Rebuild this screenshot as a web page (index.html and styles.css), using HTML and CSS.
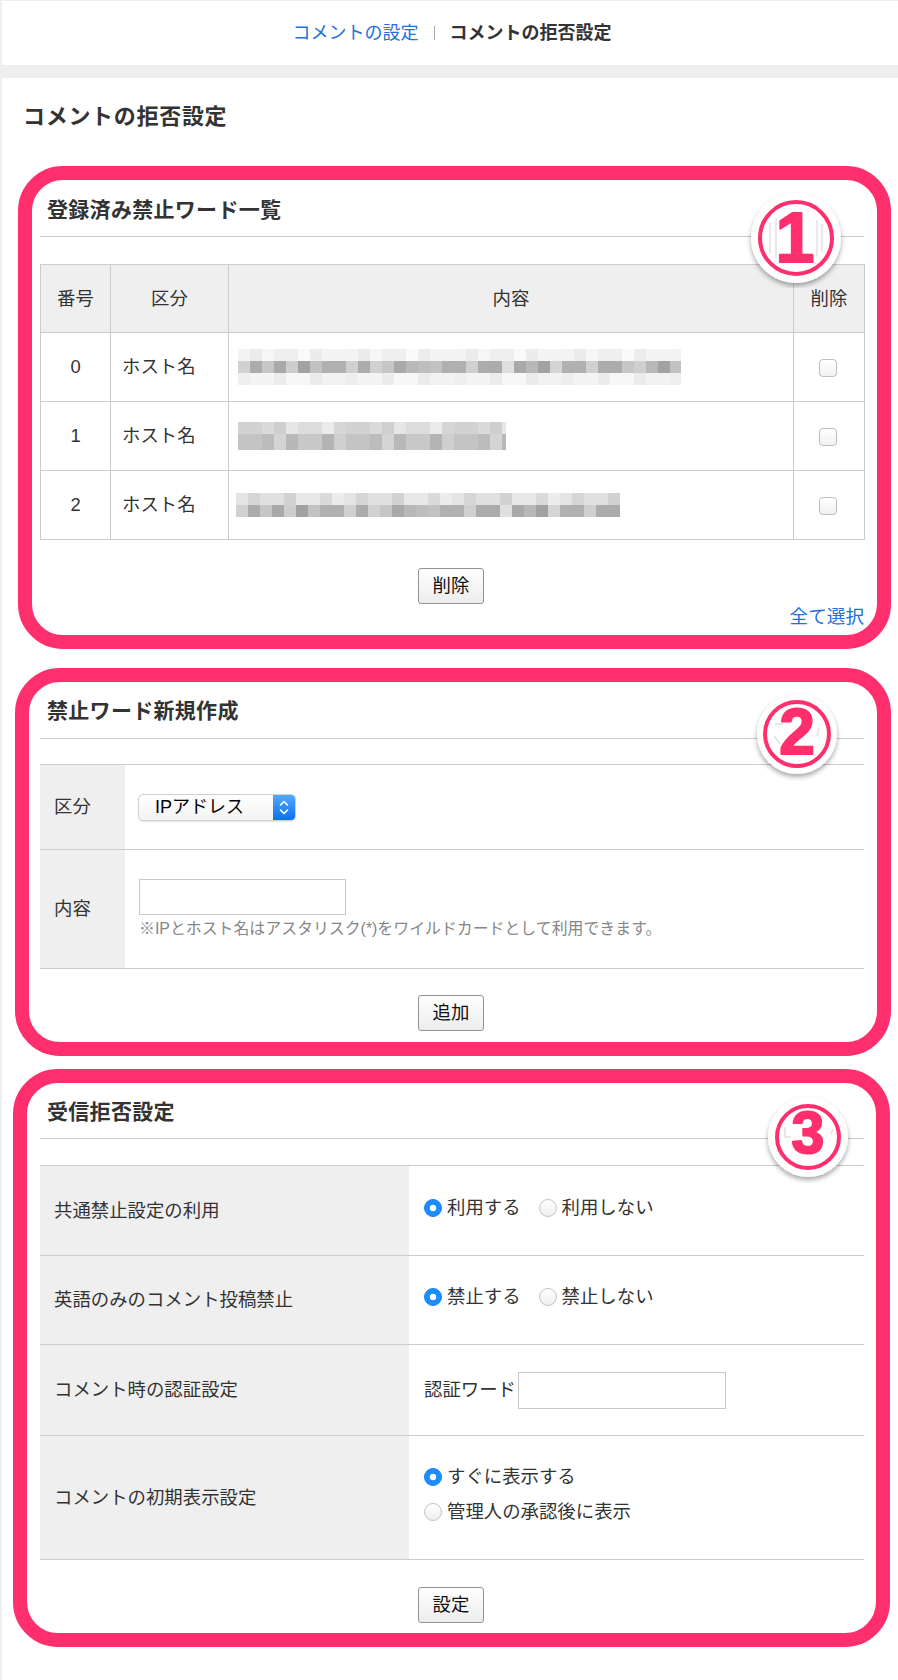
FILE: index.html
```html
<!DOCTYPE html>
<html lang="ja">
<head>
<meta charset="utf-8">
<title>コメントの拒否設定</title>
<link rel="stylesheet" href="styles.css">
</head>
<body>
<header class="topbar">
  <nav class="crumbs">
    <a class="crumb-link" href="#">コメントの設定</a>
    <span class="crumb-sep"></span>
    <strong class="crumb-current">コメントの拒否設定</strong>
  </nav>
</header>

<main class="content">
  <h1 class="page-title">コメントの拒否設定</h1>

  <div class="anno anno-1">
    <section class="panel">
      <h2 class="panel-title">登録済み禁止ワード一覧</h2>
      <table class="list-table">
        <colgroup>
          <col class="c-num"><col class="c-kind"><col class="c-body"><col class="c-del">
        </colgroup>
        <thead>
          <tr class="head-row"><th>番号</th><th>区分</th><th>内容</th><th>削除</th></tr>
        </thead>
        <tbody>
          <tr class="body-row">
            <td class="num">0</td>
            <td class="kind">ホスト名</td>
            <td class="body">
              <div class="blur blur-a">
                <span class="band band-light"></span>
                <span class="band band-dark"></span>
                <span class="band band-faint"></span>
              </div>
            </td>
            <td class="del"><input type="checkbox" class="check"></td>
          </tr>
          <tr class="body-row">
            <td class="num">1</td>
            <td class="kind">ホスト名</td>
            <td class="body">
              <div class="blur blur-b">
                <span class="band band-mid"></span>
                <span class="band band-tall band-middark"></span>
              </div>
            </td>
            <td class="del"><input type="checkbox" class="check"></td>
          </tr>
          <tr class="body-row">
            <td class="num">2</td>
            <td class="kind">ホスト名</td>
            <td class="body">
              <div class="blur blur-c">
                <span class="band band-mid2"></span>
                <span class="band band-dark"></span>
              </div>
            </td>
            <td class="del"><input type="checkbox" class="check"></td>
          </tr>
        </tbody>
      </table>
      <div class="actions actions-1"><button class="btn" type="button">削除</button></div>
      <div class="select-all"><a href="#">全て選択</a></div>
    </section>
    <svg class="badge badge-1" width="100" height="100" viewBox="0 0 100 100">
      <defs>
        <filter id="sh1" x="-30%" y="-30%" width="160%" height="170%">
          <feDropShadow dx="0" dy="3" stdDeviation="2.5" flood-color="#000" flood-opacity="0.35"/>
        </filter>
      </defs>
      <circle cx="50" cy="50" r="45" fill="#fff" filter="url(#sh1)"/>
      <path d="M24 34 L24 66 M30 30 L30 70 M71 32 L71 68 M76 36 L76 64" stroke="#e2e2e2" stroke-width="1.5" fill="none"/>
      <circle cx="50" cy="50" r="36" fill="none" stroke="#ff2f6d" stroke-width="4"/>
      <text x="49" y="74" text-anchor="middle" class="badge-num badge-num-1">1</text>
    </svg>
  </div>

  <div class="anno anno-2">
    <section class="panel">
      <h2 class="panel-title">禁止ワード新規作成</h2>
      <table class="form-table form-table-2">
        <tr class="row-85">
          <th>区分</th>
          <td>
            <div class="select">
              <span class="select-value">IPアドレス</span>
              <span class="select-arrows">
                <svg width="22" height="25" viewBox="0 0 22 25"><path d="M7.5 10 L11 6.5 L14.5 10 M7.5 15 L11 18.5 L14.5 15" stroke="#fff" stroke-width="1.6" fill="none" stroke-linecap="round" stroke-linejoin="round"/></svg>
              </span>
            </div>
          </td>
        </tr>
        <tr class="row-119">
          <th>内容</th>
          <td>
            <input type="text" class="text-input">
            <p class="note">※IPとホスト名はアスタリスク(*)をワイルドカードとして利用できます。</p>
          </td>
        </tr>
      </table>
      <div class="actions actions-2"><button class="btn" type="button">追加</button></div>
    </section>
    <svg class="badge badge-2" width="100" height="100" viewBox="0 0 100 100">
      <defs>
        <filter id="sh2" x="-30%" y="-30%" width="160%" height="170%">
          <feDropShadow dx="0" dy="3" stdDeviation="2.5" flood-color="#000" flood-opacity="0.35"/>
        </filter>
      </defs>
      <circle cx="50" cy="50" r="40" fill="#fff" filter="url(#sh2)"/>
      <path d="M28 40 L36 40 M27 52 L33 60 M72 44 L70 52" stroke="#e0e0e0" stroke-width="1.5" fill="none"/>
      <circle cx="50" cy="50" r="32" fill="none" stroke="#ff2f6d" stroke-width="4"/>
      <text x="50" y="70" text-anchor="middle" class="badge-num badge-num-2">2</text>
    </svg>
  </div>

  <div class="anno anno-3">
    <section class="panel">
      <h2 class="panel-title">受信拒否設定</h2>
      <table class="form-table form-table-3">
        <tr class="row-90">
          <th>共通禁止設定の利用</th>
          <td class="td-radio">
            <div class="opts">
              <label class="opt"><input type="radio" name="common" class="radio" checked>利用する</label>
              <label class="opt"><input type="radio" name="common" class="radio">利用しない</label>
            </div>
          </td>
        </tr>
        <tr class="row-89">
          <th>英語のみのコメント投稿禁止</th>
          <td class="td-radio">
            <div class="opts">
              <label class="opt"><input type="radio" name="eng" class="radio" checked>禁止する</label>
              <label class="opt"><input type="radio" name="eng" class="radio">禁止しない</label>
            </div>
          </td>
        </tr>
        <tr class="row-91">
          <th>コメント時の認証設定</th>
          <td>
            <div class="auth">
              <span class="auth-label">認証ワード</span><input type="text" class="text-input auth-input">
            </div>
          </td>
        </tr>
        <tr class="row-124">
          <th>コメントの初期表示設定</th>
          <td class="td-radio">
            <div class="opts opts-stack">
              <label class="opt"><input type="radio" name="disp" class="radio" checked>すぐに表示する</label>
              <label class="opt"><input type="radio" name="disp" class="radio">管理人の承認後に表示</label>
            </div>
          </td>
        </tr>
      </table>
      <div class="actions actions-3"><button class="btn" type="button">設定</button></div>
    </section>
    <svg class="badge badge-3" width="100" height="100" viewBox="0 0 100 100">
      <defs>
        <filter id="sh3" x="-30%" y="-30%" width="160%" height="170%">
          <feDropShadow dx="0" dy="3" stdDeviation="2.5" flood-color="#000" flood-opacity="0.35"/>
        </filter>
      </defs>
      <circle cx="50" cy="50" r="40" fill="#fff" filter="url(#sh3)"/>
      <path d="M27 40 L27 50 L33 50 M75 42 L73 47" stroke="#e0e0e0" stroke-width="1.5" fill="none"/>
      <circle cx="50" cy="50" r="31" fill="none" stroke="#ff2f6d" stroke-width="4"/>
      <text x="50" y="66" text-anchor="middle" class="badge-num badge-num-3">3</text>
    </svg>
  </div>
</main>
</body>
</html>
```

FILE: styles.css
```css
html, body {
  margin: 0;
}

body {
  background: #eeeeee;
  padding: 1px 0 3px 2px;
  font-family: "Liberation Sans", "Noto Sans CJK JP", sans-serif;
  font-size: 18px;
  color: #333;
}

/* ---------- top breadcrumb bar ---------- */
.topbar {
  background: #fff;
  height: 64px;
  display: flex;
  justify-content: center;
  align-items: center;
}

.crumbs {
  display: flex;
  align-items: center;
  font-size: 18px;
  line-height: 24px;
  padding-left: 4px;
}

.crumb-link {
  color: #2170db;
  text-decoration: none;
}

.crumb-sep {
  display: block;
  width: 1px;
  height: 14px;
  background: #a8a8a8;
  margin: 0 15px;
}

.crumb-current {
  font-weight: 700;
  color: #333;
}

/* ---------- main content ---------- */
.content {
  background: #fff;
  margin-top: 13px;
  padding: 24px 0 33px;
}

.page-title {
  margin: 0 0 34px 21px;
  font-size: 22px;
  line-height: 30px;
  letter-spacing: 0.7px;
  font-weight: 700;
  color: #333;
}

/* pink annotation frames */
.anno {
  position: relative;
  border: 14px solid #ff2f6d;
  border-radius: 45px;
  background: #fff;
}

.anno-1 {
  margin: 0 7px 19px 16px;
  padding: 0 13px 6px 8px;
}

.anno-2 {
  margin: 0 7px 13px 13px;
  padding: 0 13px 11px 11px;
}

.anno-3 {
  margin: 0 8px 0 11px;
  padding: 0 12px 10px 13px;
}

.panel-title {
  margin: 0;
  padding: 15px 0 11px 7px;
  border-bottom: 1px solid #cccccc;
  font-size: 21px;
  line-height: 30px;
  letter-spacing: 0.3px;
  font-weight: 700;
  color: #333;
}

.anno-2 .panel-title {
  padding: 14px 0 12px 7px;
}

.anno-3 .panel-title {
  padding: 14px 0 11px 7px;
}

/* ---------- list table ---------- */
.list-table {
  width: 824px;
  margin-top: 27px;
  border-collapse: collapse;
  table-layout: fixed;
}

.c-num { width: 70px; }
.c-kind { width: 118px; }
.c-body { width: 565px; }
.c-del { width: 71px; }

.list-table th,
.list-table td {
  border: 1px solid #cccccc;
  padding: 0;
  font-size: 18.4px;
  line-height: 24px;
  vertical-align: middle;
}

.list-table th {
  background: #efefef;
  font-weight: 400;
  text-align: center;
  color: #333;
}

.head-row { height: 68px; }
.body-row { height: 69px; }

.list-table .num { text-align: center; }
.list-table .kind { padding-left: 11px; }
.list-table .body { padding-left: 9px; }
.list-table .del { text-align: center; }

.check {
  appearance: none;
  -webkit-appearance: none;
  display: inline-block;
  vertical-align: middle;
  width: 18px;
  height: 18px;
  margin: 0 2px 0 0;
  border: 1px solid #bdbdbd;
  border-radius: 4px;
  background: linear-gradient(#ffffff, #f1f1f1);
  box-sizing: border-box;
}

/* pixelated (blurred) content */
.blur {
  display: flex;
  flex-direction: column;
}

.blur-a { width: 443px; }
.blur-b { width: 268px; }
.blur-c { width: 384px; margin-left: -2px; }

.band {
  display: block;
  height: 12px;
}

.band-tall { height: 16px; }

.band-light {
  background: repeating-linear-gradient(90deg,
    #f3f3f3 0 12px, #ebebeb 12px 24px, #f6f6f6 24px 36px, #efefef 36px 60px,
    #fafafa 60px 72px, #ececec 72px 84px, #f4f4f4 84px 108px);
}

.band-faint {
  background: repeating-linear-gradient(90deg,
    #eeeeee 0 12px, #f4f4f4 12px 36px, #ececec 36px 48px, #f7f7f7 48px 72px,
    #ebebeb 72px 84px, #f2f2f2 84px 108px);
}

.band-dark {
  background:
    repeating-linear-gradient(90deg,
      rgba(255,255,255,0.45) 0 12px, transparent 12px 48px,
      rgba(255,255,255,0.3) 48px 60px, transparent 60px 132px),
    repeating-linear-gradient(90deg,
      #acacac 0 24px, #c6c6c6 24px 36px, #a9a9a9 36px 48px, #b8b8b8 48px 60px,
      #a2a2a2 60px 72px, #c2c2c2 72px 84px, #b0b0b0 84px 108px, #d0d0d0 108px 120px);
}

.band-mid {
  background: repeating-linear-gradient(90deg,
    #d2d2d2 0 24px, #dadada 24px 36px, #cfcfcf 36px 48px, #e6e6e6 48px 60px,
    #dcdcdc 60px 84px, #ebebeb 84px 96px, #d6d6d6 96px 108px);
}

.band-mid2 {
  background: repeating-linear-gradient(90deg,
    #e4e4e4 0 12px, #d6d6d6 12px 24px, #e0e0e0 24px 48px, #d2d2d2 48px 60px,
    #e8e8e8 60px 84px, #dadada 84px 96px, #ececec 96px 108px);
}

.band-middark {
  background: repeating-linear-gradient(90deg,
    #c4c4c4 0 24px, #bcbcbc 24px 36px, #d4d4d4 36px 48px, #b8b8b8 48px 60px,
    #c8c8c8 60px 84px, #b4b4b4 84px 96px, #cfcfcf 96px 108px);
}

/* ---------- buttons ---------- */
.actions {
  display: flex;
  justify-content: center;
  padding-right: 2px;
}

.actions-1 { margin-top: 28px; }
.actions-2 { margin-top: 26px; }
.actions-3 { margin-top: 27px; }

.btn {
  width: 66px;
  height: 36px;
  padding: 0;
  border: 1px solid #939393;
  border-radius: 3px;
  background: linear-gradient(#ffffff, #ececec);
  font-family: "Liberation Sans", "Noto Sans CJK JP", sans-serif;
  font-size: 18.4px;
  line-height: 24px;
  color: #111;
}

.select-all {
  margin-top: 1px;
  text-align: right;
  line-height: 24px;
  font-size: 18.6px;
}

.select-all a {
  color: #2170db;
  text-decoration: none;
}

/* ---------- form tables ---------- */
.form-table {
  width: 824px;
  border-collapse: collapse;
  table-layout: fixed;
}

.form-table-2 { margin-top: 25px; }
.form-table-3 { margin-top: 26px; }

.form-table th,
.form-table td {
  border-top: 1px solid #cccccc;
  border-bottom: 1px solid #cccccc;
  padding: 0;
  vertical-align: middle;
  font-size: 18.4px;
  line-height: 24px;
}

.form-table th {
  background: #efefef;
  font-weight: 400;
  text-align: left;
  color: #333;
  padding-left: 14px;
}

.form-table-2 th { width: 71px; }
.form-table-2 td { padding-left: 13px; }

.form-table-3 th { width: 355px; }
.form-table-3 td { padding-left: 15px; }
.form-table-3 td.td-radio { padding-bottom: 6px; }

.row-85 { height: 85px; }
.row-119 { height: 119px; }
.row-90 { height: 90px; }
.row-89 { height: 89px; }
.row-91 { height: 91px; }
.row-124 { height: 124px; }

.select {
  display: flex;
  align-items: stretch;
  width: 158px;
  height: 27px;
  box-sizing: border-box;
  border: 1px solid #d0d0d0;
  border-radius: 5px;
  overflow: hidden;
  background: linear-gradient(#ffffff, #f3f3f3);
  box-shadow: 0 1px 1px rgba(0, 0, 0, 0.1);
}

.select-value {
  flex: 1;
  padding-left: 16px;
  font-size: 18px;
  line-height: 25px;
  color: #000;
}

.select-arrows {
  width: 22px;
  display: flex;
  align-items: center;
  justify-content: center;
  background: linear-gradient(#52aaff, #0b70ee);
}

.text-input {
  display: block;
  width: 207px;
  height: 36px;
  margin: 0 0 0 1px;
  box-sizing: border-box;
  border: 1px solid #c8c8c8;
  border-radius: 0;
  background: #fff;
  padding: 0 4px;
  font-size: 16px;
}

.note {
  margin: 3px 0 0 1px;
  font-size: 15.9px;
  line-height: 22px;
  color: #868686;
}

/* radios */
.opts {
  display: flex;
  align-items: center;
  gap: 18px;
}

.opts-stack {
  flex-direction: column;
  align-items: flex-start;
  gap: 11px;
}

.opt {
  display: inline-flex;
  align-items: center;
  gap: 5px;
  color: #333;
}

.radio {
  appearance: none;
  -webkit-appearance: none;
  width: 18px;
  height: 18px;
  margin: 0;
  box-sizing: border-box;
  border-radius: 50%;
  border: 1px solid #c4c4c4;
  background: linear-gradient(#ffffff, #eeeeee);
}

.radio:checked {
  border: 1px solid #1684f6;
  background: radial-gradient(circle, #ffffff 0 3px, #1b8dff 3.6px);
}

.auth {
  display: flex;
  align-items: center;
}

.auth-label {
  color: #333;
}

.auth-input {
  width: 208px;
  height: 37px;
  margin-left: 2px;
}

/* number badges drawn over the frames */
.badge {
  position: absolute;
  display: block;
}

.badge-1 { top: 8px; right: 31px; }
.badge-2 { top: 2px; right: 30px; }
.badge-3 { top: 4px; right: 18px; }

.badge-num {
  font-family: "Liberation Sans", "DejaVu Sans", sans-serif;
  font-weight: 700;
  fill: #ff2f6d;
  stroke: #ff2f6d;
  stroke-width: 2px;
  stroke-linejoin: round;
}

.badge-num-1 { font-size: 70px; }
.badge-num-2 { font-size: 64px; }
.badge-num-3 { font-size: 59px; }
```
